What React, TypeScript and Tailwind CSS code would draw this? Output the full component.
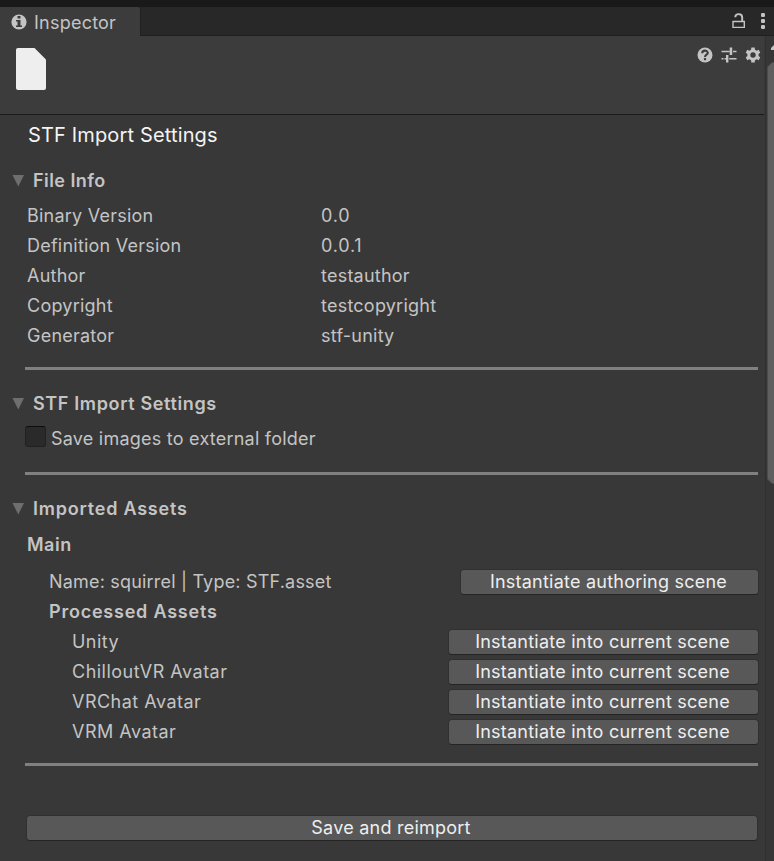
import type { ReactNode } from "react";

const fileInfo = [
  ["Binary Version", "0.0"],
  ["Definition Version", "0.0.1"],
  ["Author", "testauthor"],
  ["Copyright", "testcopyright"],
  ["Generator", "stf-unity"],
];

const targets = ["Unity", "ChilloutVR Avatar", "VRChat Avatar", "VRM Avatar"];

function Foldout({ className, children }: { className: string; children: ReactNode }) {
  return (
    <div className={`flex h-[30px] items-center pl-3 font-semibold ${className}`}>
      <svg className="mr-[9px] h-3 w-3 shrink-0" viewBox="0 0 12 12" fill="#6e6e6e">
        <path d="M0.5 0H12L6.3 11.5Z" />
      </svg>
      {children}
    </div>
  );
}

function Divider() {
  return <div className="ml-[25px] mr-[7px] h-[3px] bg-[#808080]" />;
}

function Button({ className, children }: { className: string; children: ReactNode }) {
  return (
    <button
      className={`flex h-[26px] items-center justify-center rounded-[4px] border border-[#303030] border-b-[#242424] bg-[#585858] pr-0.5 tracking-[0.23px] text-[#eeeeee] ${className}`}
    >
      {children}
    </button>
  );
}

export default function App() {
  return (
    <div className="flex h-[861px] w-[774px] flex-col overflow-hidden bg-[#383838] font-['Inter',sans-serif] text-[18px] leading-[30px] tracking-[0.23px] whitespace-nowrap text-[#c4c4c4]">
      <div className="h-[7px] shrink-0 bg-[#191919]" />
      <div className="flex h-[29px] shrink-0 bg-[#282828]">
        <div className="flex w-[141px] items-center rounded-tr-[3px] border-r border-[#202020] bg-[#3c3c3c] pl-[11px]">
          <svg className="mr-[7px] h-4 w-4" viewBox="0 0 16 16">
            <circle cx="8" cy="8" r="7.6" fill="#c4c4c4" />
            <path d="M6.5 2h3v2.6h-3zM5 6h4.500v5.400H11V13H5v-1.600h1.500V7.600H5z" fill="#3c3c3c" />
          </svg>
          <span className="pt-0.5">Inspector</span>
        </div>
        <div className="flex flex-1 items-center justify-end border-b border-[#1f1f1f] pr-[9px]">
          <svg className="mr-[16px] h-4 w-[13px]" viewBox="0 0 13 16" fill="none" stroke="#c4c4c4">
            <path d="M1 8.500H12.300V14.400H1Z" strokeWidth="1.4" />
            <path d="M10.2 8.500V4.500C10.200 0 3.500 0 3.200 4.300" strokeWidth="1.9" />
          </svg>
          <svg className="h-4 w-1" viewBox="0 0 4 16" fill="#c4c4c4">
            <rect y="0" width="4" height="4" rx="1.2" />
            <rect y="6" width="4" height="4" rx="1.2" />
            <rect y="12" width="4" height="4" rx="1.2" />
          </svg>
        </div>
      </div>

      <div className="flex min-h-0 flex-1">
        <main className="flex w-[765px] shrink-0 flex-col">
          <header className="mr-px flex h-[79px] shrink-0 items-start border-b border-[#1a1a1a] bg-[#3c3c3c] pl-4 pr-[3px]">
            <svg className="mt-3 h-[42px] w-[30px]" viewBox="0 0 30 42" fill="#eeeeee">
              <path d="M2 0H18.5L30 11.5V40Q30 42 28 42H2Q0 42 0 40V2Q0 0 2 0Z" />
            </svg>
            <div className="ml-auto mt-[11px] flex gap-2">
              <svg className="h-4 w-4" viewBox="0 0 16 16">
                <circle cx="8" cy="8" r="7.5" fill="#c4c4c4" />
                <path d="M5.2 6.2C5.2 2.8 10.8 2.9 10.8 6C10.8 7.8 8 7.6 8 9.9" fill="none" stroke="#3c3c3c" strokeWidth="2.1" />
                <rect x="6.9" y="11" width="2.2" height="2.2" fill="#3c3c3c" />
              </svg>
              <svg className="h-4 w-4" viewBox="0 0 16 16" fill="#c4c4c4">
                <path d="M0.500 3.700h8v1.600h-8zM8.700 0.500h2.500v7.500H8.700zM12 3.700h3.500v1.600H12zM0.500 11h2v1.600h-2zM3.500 11H5v1.600H3.500zM5 8h2.400v7.500H5zM8.200 11h7.300v1.600H8.200z" />
              </svg>
              <svg className="h-4 w-4" viewBox="0 0 16 16">
                <g fill="#c4c4c4">
                  <circle cx="8" cy="8" r="5.7" />
                  <rect x="6.2" y="0.5" width="3.6" height="15" rx="0.5" />
                  <rect x="6.2" y="0.5" width="3.6" height="15" rx="0.5" transform="rotate(60 8 8)" />
                  <rect x="6.2" y="0.5" width="3.6" height="15" rx="0.5" transform="rotate(120 8 8)" />
                </g>
                <circle cx="8" cy="8" r="2.7" fill="#3c3c3c" />
              </svg>
            </div>
          </header>

          <h1 className="h-10 pl-7 text-[20px] leading-10 tracking-[0.15px] text-[#f4f4f4]">STF Import Settings</h1>

          <section className="mt-[11px]">
            <Foldout className="tracking-[0.45px]">File Info</Foldout>
            <dl className="mt-[5px] grid grid-cols-[294px_1fr] pl-[27px]">
              {fileInfo.map(([label, value]) => (
                <div key={label} className="contents">
                  <dt>{label}</dt>
                  <dd className={value.startsWith("0") ? "tracking-[0.8px]" : ""}>{value}</dd>
                </div>
              ))}
            </dl>
          </section>

          <div className="mt-4">
            <Divider />
          </div>

          <section className="mt-[19px]">
            <Foldout className="tracking-[0.63px]">STF Import Settings</Foldout>
            <label className="mt-[5px] flex h-[30px] items-center pl-[25px]">
              <span className="mb-[5px] mr-[5px] h-[21px] w-[21px] rounded-[3px] border border-[#212121] border-t-[#0d0d0d] bg-[#2a2a2a]" />
              Save images to external folder
            </label>
          </section>

          <div className="mt-[18px]">
            <Divider />
          </div>

          <section className="mt-[19px]">
            <Foldout className="tracking-[0.78px]">Imported Assets</Foldout>
            <h2 className="mt-[6px] pl-[27px] font-semibold tracking-[0.5px]">Main</h2>
            <div className="mt-[7px] flex h-[30px] items-center justify-between pl-[49px] pr-[6px]">
              <span className="tracking-[0.19px]">Name: squirrel | Type: STF.asset</span>
              <Button className="w-[299px]">Instantiate authoring scene</Button>
            </div>
            <h3 className="pl-[49px] font-semibold tracking-[0.78px]">Processed Assets</h3>
            {targets.map((target) => (
              <div key={target} className="flex h-[30px] items-center justify-between pl-[72px] pr-[6px]">
                <span className="tracking-[0.48px]">{target}</span>
                <Button className="w-[311px]">Instantiate into current scene</Button>
              </div>
            ))}
          </section>

          <div className="mt-4">
            <Divider />
          </div>

          <Button className="ml-[26px] mr-[7px] mt-[49px]">Save and reimport</Button>
        </main>

        <aside className="flex flex-1 flex-col border-l border-[#303030] bg-[#363636] pl-[1px]">
          <svg className="ml-1 mt-2 h-[7px] w-[3px] shrink-0" viewBox="0 0 3 7" fill="#c4c4c4">
            <path d="M3 1V6H0V4Z" />
          </svg>
          <svg className="mt-[11px] h-[422px] w-[7px] shrink-0" viewBox="0 0 7 422">
            <path d="M7 0.5H5L0.5 5V417L5 421.5H7" fill="#5f5f5f" stroke="#4b4b4b" />
          </svg>
        </aside>
      </div>
    </div>
  );
}
